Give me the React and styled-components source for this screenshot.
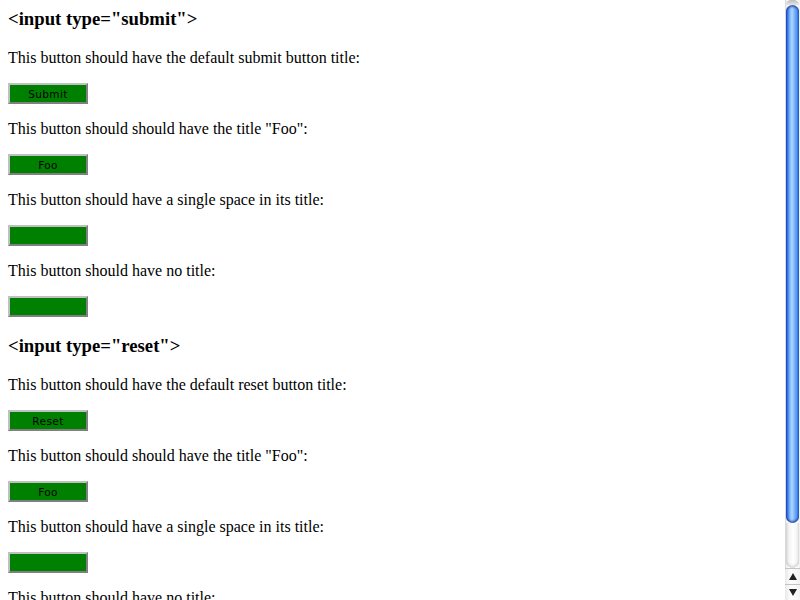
import styled, { createGlobalStyle } from 'styled-components';

const GlobalStyle = createGlobalStyle`
  html, body {
    margin: 0;
    padding: 0;
    background: #ffffff;
  }
  body {
    font-family: "Liberation Serif", "Times New Roman", serif;
    font-size: 16px;
    color: #000000;
  }
`;

// 화면 전체: 본문 + 오른쪽 스크롤바
const Screen = styled.div`
  display: flex;
  width: 800px;
  height: 600px;
  overflow: hidden;
`;

const Page = styled.div`
  flex: 1;
  padding: 8px;
  overflow: hidden;
`;

const Heading = styled.h3`
  font-family: "Liberation Serif", "Times New Roman", serif;
  font-size: 18.72px;
  font-weight: bold;
  line-height: 22px;
  margin: ${(props) => (props.$first ? '0' : '18.72px')} 0 18.72px;
`;

const Text = styled.p`
  margin: 16px 0;
  line-height: 18px;
`;

const ButtonLine = styled.div`
  height: 21px;
  display: flex;
`;

const GreenButton = styled.div`
  box-sizing: border-box;
  width: 80px;
  height: 21px;
  background: #008000;
  border-style: solid;
  border-width: 2px;
  border-color: #c0c0c0 #808080 #808080 #c0c0c0;
  display: flex;
  align-items: center;
  justify-content: center;
  font-family: "DejaVu Sans", Verdana, sans-serif;
  font-size: 10.5px;
  letter-spacing: 0.4px;
  color: #000000;
  padding-top: 1px;
`;

// 스크롤바 (Aqua 스타일)
const Scrollbar = styled.div`
  width: 15px;
  flex-shrink: 0;
  display: flex;
  flex-direction: column;
  background: linear-gradient(to right, #c8c8c8 0, #ececec 1px, #ffffff 4px, #ffffff 11px, #f0f0f0 15px);
`;

const TrackTop = styled.div`
  height: 5px;
  background: linear-gradient(to bottom, #bdbdbd, #e6e6e6);
  border-radius: 7px 7px 0 0;
  margin: 0 1px;
`;

const Thumb = styled.div`
  height: 518px;
  margin: 0 1px;
  border-radius: 7px;
  background: linear-gradient(
    to right,
    #1246c0 0,
    #3f80ea 2px,
    #84baf8 4px,
    #b0d6ff 6px,
    #84baf8 8px,
    #4d90ee 11px,
    #1a55d0 13px
  );
  box-shadow: inset 0 3px 2px -1px rgba(0, 30, 120, 0.6), inset 0 -3px 2px -1px rgba(0, 30, 120, 0.6);
`;

const TrackRest = styled.div`
  flex: 1;
  margin: 0 1px;
  border-radius: 0 0 7px 7px;
  background: linear-gradient(to right, #d8d8d8 0, #f4f4f4 3px, #ffffff 7px, #f4f4f4 11px, #dcdcdc 13px);
  box-shadow: inset 0 -3px 3px -1px rgba(0, 0, 0, 0.15);
`;

const Arrow = styled.div`
  height: 15px;
  border-top: 1px solid #c4c4c4;
  background: linear-gradient(to right, #e8e8e8, #ffffff 40%, #f2f2f2);
  display: flex;
  align-items: center;
  justify-content: center;
`;

const Triangle = styled.div`
  width: 0;
  height: 0;
  border-left: 4px solid transparent;
  border-right: 4px solid transparent;
  ${(props) =>
    props.$up
      ? 'border-bottom: 7px solid #222222;'
      : 'border-top: 7px solid #222222;'}
`;

const sections = [
  {
    title: '<input type="submit">',
    items: [
      ['This button should have the default submit button title:', 'Submit'],
      ['This button should should have the title "Foo":', 'Foo'],
      ['This button should have a single space in its title:', ''],
      ['This button should have no title:', ''],
    ],
  },
  {
    title: '<input type="reset">',
    items: [
      ['This button should have the default reset button title:', 'Reset'],
      ['This button should should have the title "Foo":', 'Foo'],
      ['This button should have a single space in its title:', ''],
      ['This button should have no title:', ''],
    ],
  },
];

function App() {
  return (
    <>
      <GlobalStyle />
      <Screen>
        <Page>
          {sections.map((section, i) => (
            <div key={section.title}>
              <Heading $first={i === 0}>{section.title}</Heading>
              {section.items.map(([text, label], j) => (
                <div key={j}>
                  <Text>{text}</Text>
                  <ButtonLine>
                    <GreenButton>{label}</GreenButton>
                  </ButtonLine>
                </div>
              ))}
            </div>
          ))}
        </Page>
        <Scrollbar>
          <TrackTop />
          <Thumb />
          <TrackRest />
          <Arrow>
            <Triangle $up />
          </Arrow>
          <Arrow>
            <Triangle />
          </Arrow>
        </Scrollbar>
      </Screen>
    </>
  );
}

export default App;
